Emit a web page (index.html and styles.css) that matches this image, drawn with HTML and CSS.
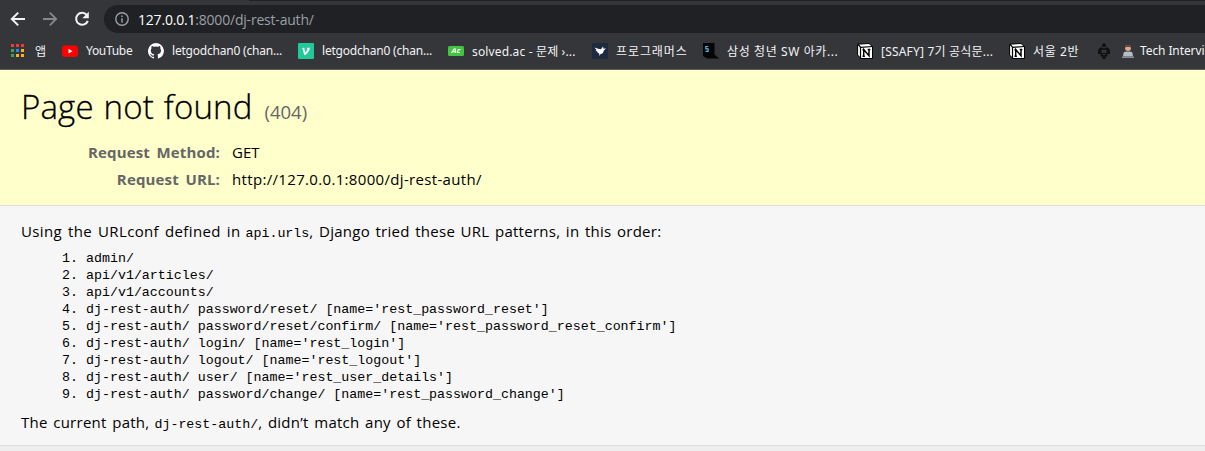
FILE: index.html
```html
<!DOCTYPE html>
<html lang="ko">
<head>
<meta charset="utf-8">
<title>Page not found at /dj-rest-auth/</title>
<link rel="stylesheet" href="styles.css">
</head>
<body>
<header class="browser">
  <div class="tabline"></div>
  <div class="toolbar">
    <svg class="nav" viewBox="0 0 16 16"><path d="M15 8H2.2M8.2 1.6 1.8 8l6.4 6.4" fill="none" stroke="#f1f3f4" stroke-width="2"/></svg>
    <svg class="nav" viewBox="0 0 16 16"><path d="M1 8h12.8M7.8 1.6 14.2 8l-6.4 6.4" fill="none" stroke="#85878a" stroke-width="1.8"/></svg>
    <svg class="nav" viewBox="0 0 16 16"><path d="M12.8 4A6 6 0 1 0 13.8 9.8" fill="none" stroke="#f1f3f4" stroke-width="2"/><path d="M14.8.8v6.5H8.3z" fill="#f1f3f4"/></svg>
    <div class="omnibox">
      <svg class="info" viewBox="0 0 14 14"><circle cx="7" cy="7" r="6.2" fill="none" stroke="#9aa0a6" stroke-width="1.4"/><path d="M7 6.2v4.3M7 3.4v1.5" stroke="#9aa0a6" stroke-width="1.5"/></svg>
      <span class="address"><b>127.0.0.1</b>:8000/dj-rest-auth/</span>
    </div>
  </div>
  <nav class="bookmarks">
    <a class="bm apps"><svg viewBox="0 0 16 16"><path d="M0 1h3v3H0zM5 1h3v3H5zM10 1h3v3h-3z" fill="#ee3b34"/><path d="M0 6h3v3H0zM0 11h3v3H0z" fill="#34a853"/><path d="M5 6h3v3H5z" fill="#1a8cff"/><path d="M5 11h3v3H5zM10 6h3v3h-3zM10 11h3v3h-3z" fill="#fbb40b"/></svg><span>앱</span></a>
    <a class="bm youtube"><svg viewBox="0 0 16 16"><rect y="2.5" width="16" height="11.5" rx="3" fill="#f00"/><path d="M6.5 5.8v4.8l4-2.4z" fill="#fff"/></svg><span>YouTube</span></a>
    <a class="bm github"><svg viewBox="0 0 16 16"><path d="M8 0a8 8 0 0 0-2.5 15.6c.4.1.5-.2.5-.4v-1.5c-2 .4-2.6-.5-2.8-1-.1-.3-.5-1-.9-1.2-.3-.2-.7-.6 0-.6s1.100.6 1.200.8c.8 1.200 1.900.9 2.400.7.1-.5.3-.9.5-1.100-1.800-.2-3.600-.9-3.600-4 0-.9.3-1.600.8-2.100-.1-.2-.4-1 .1-2.200 0 0 .7-.2 2.200.8a7.600 7.600 0 0 1 4 0c1.500-1 2.200-.8 2.200-.8.4 1.200.200 2 .1 2.200.5.5.8 1.200.8 2.100 0 3.100-1.900 3.800-3.700 4 .3.3.6.7.6 1.500v2.400c0 .2.100.500.500.400A8 8 0 0 0 8 0z" fill="#fff"/></svg><span>letgodchan0 (chan...</span></a>
    <a class="bm velog"><svg viewBox="0 0 16 16"><rect width="16" height="16" rx="1" fill="#20c997"/><path d="M4 5.500 6.100 4.600 7.400 9.600C9 7.600 9.600 6.500 9 4.900l2.500-.4c1 2.300-1.700 5.300-4.200 7.600H6.200L4.800 6.200z" fill="#fff"/></svg><span>letgodchan0 (chan...</span></a>
    <a class="bm solved"><svg viewBox="0 0 16 16"><rect y="3" width="16" height="10" rx="1.500" fill="#43c443"/><path d="M3.500 10 6 6h1.300v4M5 8.800h2M12.500 6.600h-2.300L9.300 9.500h2.500" fill="none" stroke="#fff" stroke-width="1.100"/></svg><span>solved.ac - 문제 ›...</span></a>
    <a class="bm programmers"><svg viewBox="0 0 16 16"><rect width="16" height="16" rx="1" fill="#1e2a40"/><path d="m2.500 4.500 4.500 1.500 2 .3L11 3.500l.5 2.200 2.500-.4-2.300 2.400C11.500 10 10 10.800 8.500 11L7.500 13l-.3-2.500C5.500 9.800 5 8.700 5 8.200L3.500 8l1-1z" fill="#fff"/></svg><span>프로그래머스</span></a>
    <a class="bm samsung"><svg viewBox="0 0 16 16"><path d="M0 0h11.500v11.500L16 15.500H4L0 13z" fill="#050505"/><path d="M5.300 3.500H2.800v2.300h2.300v2.500H2.500" fill="none" stroke="#55b9df" stroke-width="1.200"/></svg><span>삼성 청년 SW 아카...</span></a>
    <a class="bm ssafy"><svg viewBox="0 0 16 16"><path d="M.6 1.200 12 .5l3.500 3v12L4 15.500.6 12z" fill="#fff" stroke="#000"/><path d="M1 1.500 3.800 4.300 15.500 3.500" fill="none" stroke="#000" stroke-width="1.200"/><path d="M3.500 4v11.500" stroke="#000" stroke-width="1.200"/><path d="M6.700 13.300V6.500l5.300 6.300V6.500M5.500 6.800h2.200M10.700 6.500h2.600M5.500 13.300h2.400" fill="none" stroke="#000" stroke-width="1.500"/></svg><span>[SSAFY] 7기 공식문...</span></a>
    <a class="bm seoul"><svg viewBox="0 0 16 16"><path d="M.6 1.200 12 .5l3.500 3v12L4 15.500.6 12z" fill="#fff" stroke="#000"/><path d="M1 1.500 3.800 4.300 15.500 3.500" fill="none" stroke="#000" stroke-width="1.200"/><path d="M3.500 4v11.500" stroke="#000" stroke-width="1.200"/><path d="M6.700 13.300V6.500l5.300 6.300V6.500M5.500 6.800h2.200M10.700 6.500h2.600M5.500 13.300h2.400" fill="none" stroke="#000" stroke-width="1.500"/></svg><span>서울 2반</span></a>
    <a class="bm person"><svg viewBox="0 0 16 16"><circle cx="8" cy="2.300" r="2" fill="#111"/><path d="M4 4.500h2l2 1 2-1h2L14 7v4h-2.500v2.500H9.500V16h-3v-2.500h-2V11H2V7z" fill="#111"/><path d="M5.500 6.800h5v3.200h-5z" fill="#35363a"/><path d="M6.500 11.500h3" stroke="#35363a"/></svg></a>
    <a class="bm tech"><svg viewBox="0 0 16 16"><path d="M3 13c0-4 2-5 5-5s5 1 5 5z" fill="#697681"/><circle cx="8" cy="5" r="3" fill="#dda88f"/><path d="M4.900 4.500C5 1 11 1 11.100 4.500 9 3.500 7 3.500 4.900 4.500z" fill="#5b4038"/><path d="M4 9h8l1 4.500H3z" fill="#b6bdc5"/><path d="M2 13.500h12V15H2z" fill="#858e98"/></svg><span>Tech Interview</span></a>
  </nav>
</header>
<section class="summary">
  <h1><span class="title">Page not found</span><span class="code">(404)</span></h1>
  <dl class="meta">
    <dt>Request Method:</dt><dd>GET</dd>
    <dt>Request URL:</dt><dd class="url">http://127.0.0.1:8000/dj-rest-auth/</dd>
  </dl>
</section>
<main class="info-panel">
  <p class="line"><span class="using">Using the URLconf defined in</span><code>api.urls</code><span>, Django tried these URL patterns, in this order:</span></p>
  <ol class="patterns">
    <li>admin/</li>
    <li>api/v1/articles/</li>
    <li>api/v1/accounts/</li>
    <li>dj-rest-auth/ password/reset/ [name='rest_password_reset']</li>
    <li>dj-rest-auth/ password/reset/confirm/ [name='rest_password_reset_confirm']</li>
    <li>dj-rest-auth/ login/ [name='rest_login']</li>
    <li>dj-rest-auth/ logout/ [name='rest_logout']</li>
    <li>dj-rest-auth/ user/ [name='rest_user_details']</li>
    <li>dj-rest-auth/ password/change/ [name='rest_password_change']</li>
  </ol>
  <p class="line"><span>The current path,</span><code>dj-rest-auth/</code><span>, didn’t match any of these.</span></p>
</main>
</body>
</html>
```

FILE: styles.css
```css
* { box-sizing: border-box; }
body, h1, p, dl, dd, ol { margin: 0; padding: 0; }
body {
  height: 451px;
  overflow: hidden;
  background: #eee;
  color: #000;
  font-family: "Open Sans", "Noto Sans CJK KR", sans-serif;
  font-size: 15px;
}
svg { display: block; flex: none; }

.browser { height: 70px; background: #35363a; border-bottom: 1px solid #5d5e62; overflow: hidden; }
.tabline { height: 1px; margin-left: 249px; background: #202124; }
.toolbar { height: 36px; display: flex; align-items: center; padding-left: 10px; }
.nav { width: 16px; height: 16px; margin-right: 16px; }
.omnibox {
  flex: 1;
  height: 28px;
  margin: 0 -20px 0 -2px;
  padding-left: 11px;
  display: flex;
  align-items: center;
  gap: 9px;
  border-radius: 14px;
  background: #202124;
}
.info { width: 14px; height: 14px; }
.address { color: #9aa0a6; font-size: 14px; letter-spacing: -0.2px; white-space: nowrap; }
.address b { color: #fff; font-weight: 400; }

.bookmarks {
  height: 29px;
  display: flex;
  align-items: center;
  gap: 16px;
  padding: 0 0 2px 11px;
  color: #f1f3f4;
  font-family: "Noto Sans", "Noto Sans CJK KR", sans-serif;
  font-size: 12px;
}
.bm { flex: none; display: flex; align-items: center; gap: 8px; white-space: nowrap; }
.bm svg { width: 16px; height: 16px; }
.apps { width: 35px; }
.youtube { width: 70px; letter-spacing: -0.3px; }
.github, .velog { width: 134px; letter-spacing: -0.2px; }
.solved { width: 128px; letter-spacing: 0.15px; }
.programmers { width: 95px; letter-spacing: 0.9px; }
.samsung { width: 138px; letter-spacing: 0.6px; }
.ssafy { width: 136px; letter-spacing: 0.2px; }
.seoul { width: 71px; letter-spacing: 0.6px; }
.person { width: 16px; }
.tech { gap: 4px; margin-left: -8px; letter-spacing: -0.1px; }

.summary { height: 136px; padding: 14px 21px 0; background: #ffc; border-bottom: 1px solid #ddd; }
h1 { height: 46px; display: flex; align-items: baseline; gap: 12px; font-weight: 400; line-height: 46px; white-space: nowrap; }
.title { font-size: 33px; font-weight: 300; letter-spacing: 0.15px; word-spacing: 1.2px; -webkit-text-stroke: 0.3px #000; }
.code { color: #666; font-size: 18.5px; }
.meta { display: grid; grid-template-columns: 199px 1fr; column-gap: 12px; grid-auto-rows: 27px; line-height: 27px; padding-top: 9px; }
dt { color: #666; font-weight: 700; text-align: right; white-space: nowrap; letter-spacing: 0.15px; word-spacing: 2.5px; }
.url { letter-spacing: 0.33px; }

.info-panel { height: 240px; padding: 13px 21px 0; background: #f6f6f6; border-bottom: 1px solid #ddd; }
.line { height: 24px; line-height: 24px; display: flex; align-items: baseline; white-space: pre; letter-spacing: 0.26px; word-spacing: 1.4px; }
.using { letter-spacing: 0.35px; word-spacing: 1.8px; }
code, .patterns { font-family: "Liberation Mono", monospace; font-size: 13.31px; letter-spacing: 0; word-spacing: 0; }
code { margin-left: 5px; }
.patterns { height: 167px; padding: 7px 0 0 65px; line-height: 17px; }
.patterns li { white-space: pre; }
```
